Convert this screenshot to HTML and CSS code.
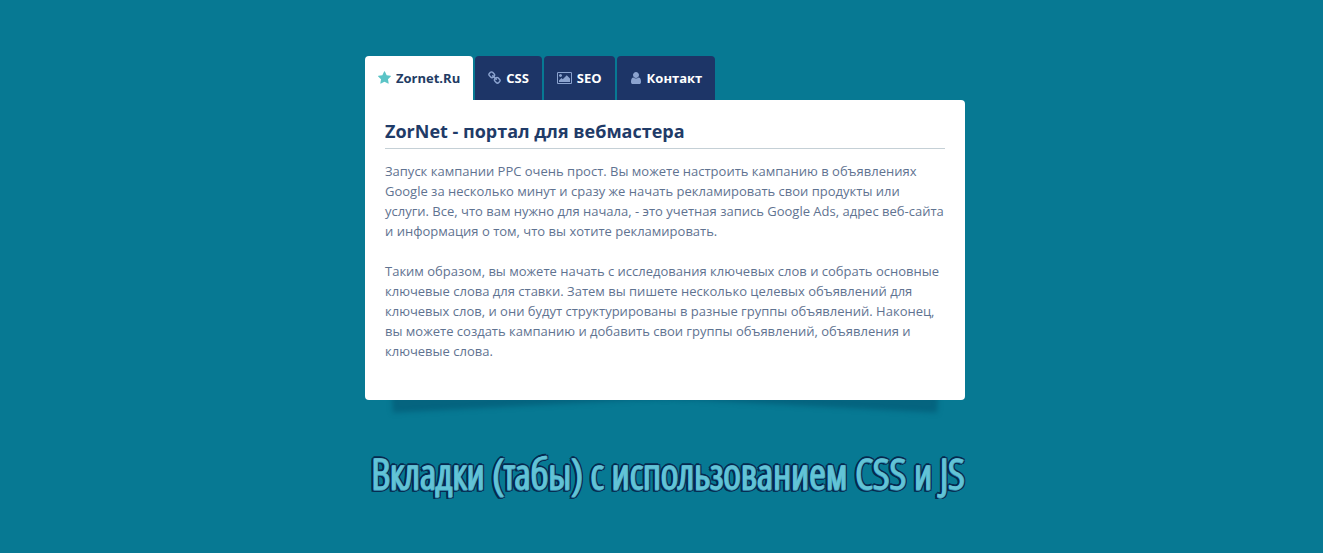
FILE: index.html
```html
<!DOCTYPE html>
<html lang="ru">
  <head>
    <meta charset="utf-8">
    <title>ZorNet - портал для вебмастера</title>
    <link rel="stylesheet" href="styles.css">
  </head>
  <body>
    <main class="container">
      <div class="tabs" role="tablist">
        <button type="button" class="tab active" role="tab" id="tab-1" aria-selected="true" aria-controls="panel">
          <svg class="icon" viewBox="64 0 1664 1792" width="13" height="14" aria-hidden="true"><path d="M1728 647q0 22-26 48l-363 354 86 500q1 7 1 20 0 21-10.500 35.500t-30.500 14.500q-19 0-40-12l-449-236-449 236q-22 12-40 12-21 0-31.500-14.500t-10.500-35.500q0-6 2-20l86-500-364-354q-25-27-25-48 0-37 56-46l502-73 225-455q19-41 49-41t49 41l225 455 502 73q56 9 56 46z"/></svg>
          Zornet.Ru
        </button>
        <button type="button" class="tab" role="tab" id="tab-2" aria-selected="false" aria-controls="panel">
          <svg class="icon" viewBox="64 0 1664 1792" width="13" height="14" aria-hidden="true"><path d="M1520 1216q0-40-28-68l-208-208q-28-28-68-28-42 0-72 32 3 3 19 18.500t21.500 21.500 15 19 13 25.500 3.500 27.500q0 40-28 68t-68 28q-15 0-27.500-3.500t-25.500-13-19-15-21.500-21.500-18.500-19q-33 31-33 73 0 40 28 68l206 207q27 27 68 27 40 0 68-26l147-146q28-28 28-67zm-703-705q0-40-28-68l-206-207q-28-28-68-28-39 0-68 27l-147 146q-28 28-28 67 0 40 28 68l208 208q27 27 68 27 42 0 72-31-3-3-19-18.500t-21.500-21.500-15-19-13-25.500-3.500-27.500q0-40 28-68t68-28q15 0 27.500 3.500t25.500 13 19 15 21.500 21.500 18.500 19q33-31 33-73zm895 705q0 120-85 203l-147 146q-83 83-203 83-121 0-204-85l-206-207q-83-83-83-203 0-123 88-209l-88-88q-86 88-208 88-120 0-204-84l-208-208q-84-84-84-204t85-203l147-146q83-83 203-83 121 0 204 85l206 207q83 83 83 203 0 123-88 209l88 88q86-88 208-88 120 0 204 84l208 208q84 84 84 204z"/></svg>
          CSS
        </button>
        <button type="button" class="tab" role="tab" id="tab-3" aria-selected="false" aria-controls="panel">
          <svg class="icon" viewBox="-64 0 1920 1792" width="15" height="14" aria-hidden="true"><path d="M576 576q0 80-56 136t-136 56-136-56-56-136 56-136 136-56 136 56 56 136zm1024 384v448h-1408v-192l320-320 160 160 512-512zm96-704h-1600q-13 0-22.500 9.500t-9.500 22.500v1216q0 13 9.500 22.500t22.500 9.500h1600q13 0 22.500-9.500t9.500-22.500v-1216q0-13-9.500-22.500t-22.500-9.500zm160 32v1216q0 66-47 113t-113 47h-1600q-66 0-113-47t-47-113v-1216q0-66 47-113t113-47h1600q66 0 113 47t47 113z"/></svg>
          SEO
        </button>
        <button type="button" class="tab" role="tab" id="tab-4" aria-selected="false" aria-controls="panel">
          <svg class="icon" viewBox="192 0 1408 1792" width="12" height="14" aria-hidden="true"><path d="M1536 1399q0 109-62.500 187t-150.500 78h-854q-88 0-150.500-78t-62.500-187q0-85 8.500-160.500t31.500-152 58.500-131 94-89 134.500-34.500q131 128 313 128t313-128q76 0 134.500 34.500t94 89 58.500 131 31.500 152 8.500 160.500zm-256-887q0 159-112.500 271.500t-271.500 112.500-271.500-112.500-112.500-271.500 112.500-271.500 271.500-112.500 271.500 112.500 112.500 271.500z"/></svg>
          Контакт
        </button>
      </div>

      <section class="panel" id="panel" role="tabpanel" aria-labelledby="tab-1">
        <h2>ZorNet - портал для вебмастера</h2>
        <p>Запуск кампании PPC очень прост. Вы можете настроить кампанию в объявлениях Google за несколько минут и сразу же начать рекламировать свои продукты или услуги. Все, что вам нужно для начала, - это учетная запись Google Ads, адрес веб-сайта и информация о том, что вы хотите рекламировать.</p>
        <p>Таким образом, вы можете начать с исследования ключевых слов и собрать основные ключевые слова для ставки. Затем вы пишете несколько целевых объявлений для ключевых слов, и они будут структурированы в разные группы объявлений. Наконец, вы можете создать кампанию и добавить свои группы объявлений, объявления и ключевые слова.</p>
      </section>

      <h1 class="caption">Вкладки (табы) с использованием CSS и JS</h1>
    </main>
  </body>
</html>
```

FILE: styles.css
```css
* {
  box-sizing: border-box;
  margin: 0;
  padding: 0;
}

body {
  background-color: #077993;
  color: #5f7391;
  font-family: "Open Sans", "Noto Sans", sans-serif;
  font-size: 13px;
  line-height: 20px;
  padding: 56px 0 0 7px;
}

.container {
  margin: 0 auto;
  max-width: 600px;
}

.tabs {
  display: flex;
  gap: 2px;
}

.tab {
  display: flex;
  align-items: center;
  gap: 5px;
  padding: 12px 13px;
  border: none;
  border-radius: 4px 4px 0 0;
  background-color: #1d3567;
  color: #fff;
  font: inherit;
  font-weight: bold;
  cursor: pointer;
}

.tab .icon {
  fill: #8ba3cf;
}

.tab.active {
  background-color: #fff;
  color: #223b63;
}

.tab.active .icon {
  fill: #5bc4c6;
}

.panel {
  position: relative;
  min-height: 300px;
  padding: 19px 20px;
  border-radius: 0 4px 4px 4px;
  background-color: #fff;
}

/* lifted corners */
.panel::before,
.panel::after {
  content: "";
  position: absolute;
  z-index: -1;
  bottom: 15px;
  left: 25px;
  width: 50%;
  height: 20%;
  box-shadow: 0 20px 5px #05647f;
  transform: rotate(-3deg);
}

.panel::after {
  left: auto;
  right: 25px;
  transform: rotate(3deg);
}

.panel h2 {
  margin-bottom: 12px;
  padding-bottom: 5px;
  border-bottom: 1px solid #c5d0d6;
  color: #1f3b68;
  font-size: 18px;
  line-height: 24px;
}

.panel p + p {
  margin-top: 20px;
}

/* light shadows thicken the letters, dark ones outline them */
.caption {
  margin-top: 47px;
  padding-left: 6px;
  color: #62c3d6;
  font-family: "Open Sans Condensed Light", "Liberation Sans Narrow", "Liberation Sans", sans-serif;
  font-size: 42px;
  font-weight: bold;
  line-height: 52px;
  white-space: nowrap;
  text-shadow:
    1px 0 0 #4aaec6,
    0 1px 0 #3a96b4,
    2px -1px 0 #06294f,
    2px 1px 0 #06294f,
    0 -2px 0 #06294f,
    -1px -1px 0 #06294f,
    -1px 1px 0 #06294f,
    -2px 0 0 #06294f,
    -2px 2px 0 #06294f,
    0 2px 0 #06294f;
}
```
